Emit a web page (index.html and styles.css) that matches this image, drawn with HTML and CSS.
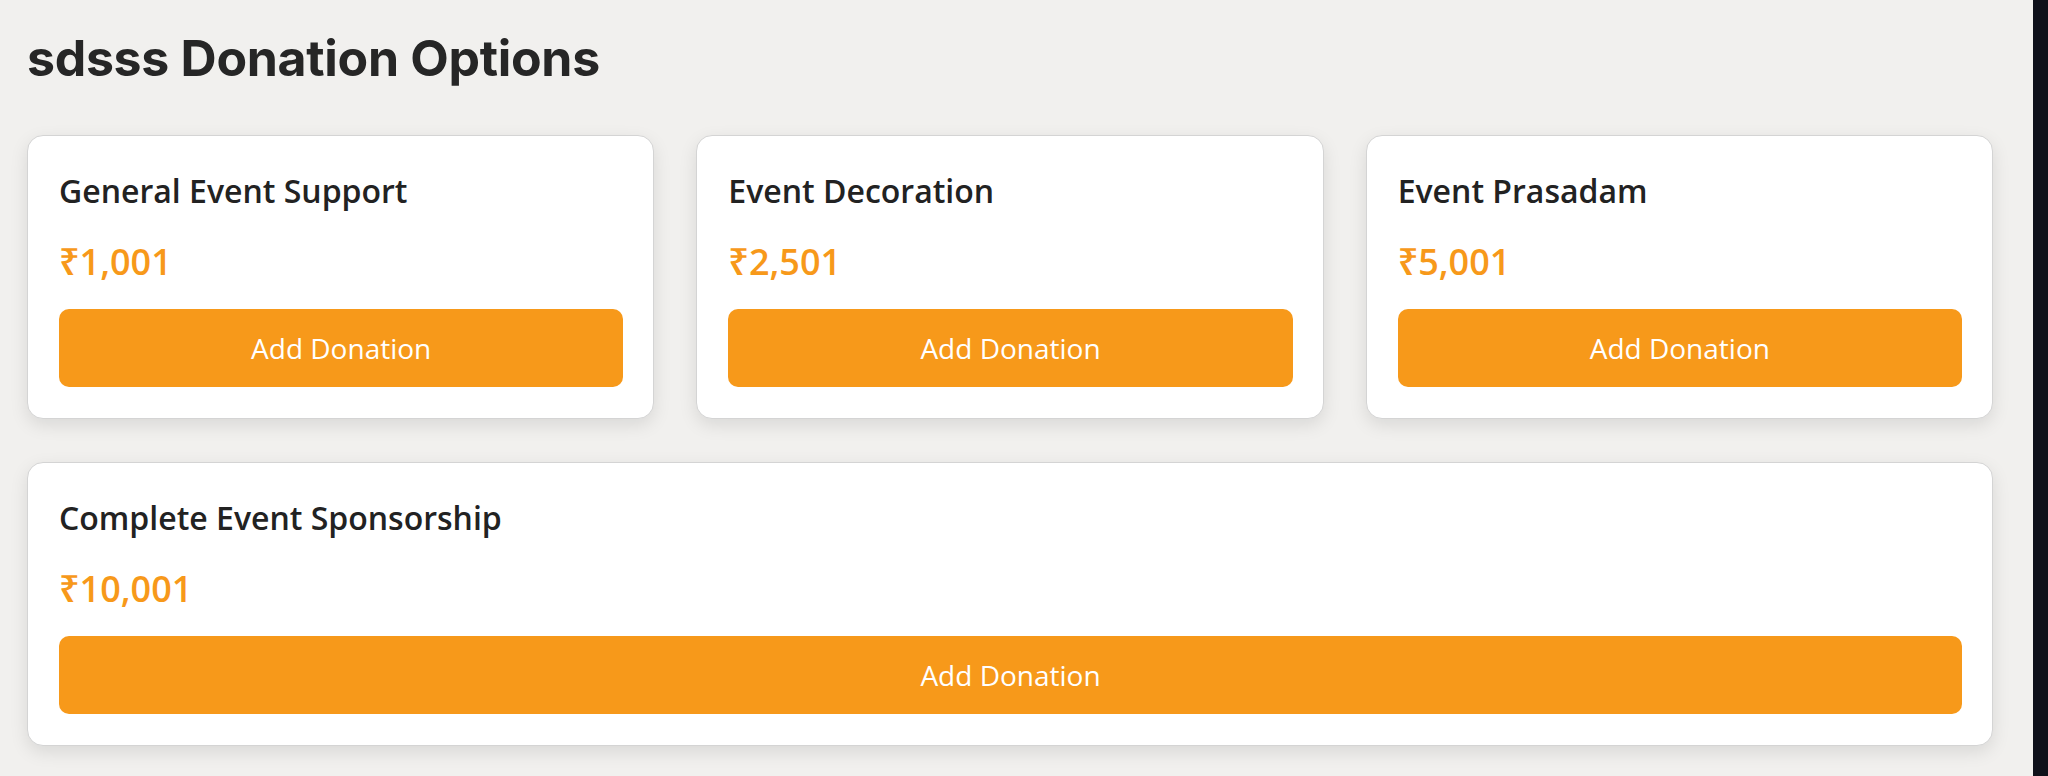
FILE: index.html
```html
<!DOCTYPE html>
<html lang="en">
<head>
<meta charset="utf-8">
<title>sdsss Donation Options</title>
<link rel="stylesheet" href="styles.css">
</head>
<body>
<div class="page">
  <main class="main">
    <h1 class="heading">sdsss Donation Options</h1>
    <div class="grid">
      <div class="card">
        <h3 class="card-title">General Event Support</h3>
        <div class="price">₹1,001</div>
        <button class="btn">Add Donation</button>
      </div>
      <div class="card">
        <h3 class="card-title">Event Decoration</h3>
        <div class="price">₹2,501</div>
        <button class="btn">Add Donation</button>
      </div>
      <div class="card">
        <h3 class="card-title">Event Prasadam</h3>
        <div class="price">₹5,001</div>
        <button class="btn">Add Donation</button>
      </div>
      <div class="card card-wide">
        <h3 class="card-title">Complete Event Sponsorship</h3>
        <div class="price">₹10,001</div>
        <button class="btn">Add Donation</button>
      </div>
    </div>
  </main>
  <div class="scroll-strip"></div>
</div>
</body>
</html>
```
FILE: styles.css
```css
html, body {
  margin: 0;
  padding: 0;
  height: 100%;
}
body {
  background: #f1f0ee;
  font-family: "Open Sans", "Noto Sans", sans-serif;
  color: #222222;
}
.page {
  display: flex;
  min-height: 776px;
}
.main {
  flex: 1;
  padding: 22px 40px 0 27px;
}
.scroll-strip {
  width: 15px;
  background: #0f111a;
  flex-shrink: 0;
}
.heading {
  margin: 0 0 41px 0;
  font-family: "Inter", "Noto Sans", sans-serif;
  font-weight: 700;
  font-size: 50px;
  line-height: 72px;
  color: #262626;
  letter-spacing: -0.3px;
}
.grid {
  display: grid;
  grid-template-columns: repeat(3, 1fr);
  column-gap: 42px;
  row-gap: 43px;
}
.card-wide {
  grid-column: 1 / -1;
}
.card {
  background: #ffffff;
  border: 1px solid #d4d4d4;
  border-radius: 16px;
  box-shadow: 0 6px 18px rgba(0, 0, 0, 0.1);
  padding: 33px 30px 31px 31px;
  display: flex;
  flex-direction: column;
}
.card-title {
  margin: 0;
  font-size: 32px;
  font-weight: 600;
  line-height: 44px;
  color: #222222;
}
.price {
  margin-top: 26px;
  font-size: 36px;
  font-weight: 600;
  line-height: 46px;
  color: #f7991a;
}
.btn {
  margin-top: 24px;
  height: 78px;
  border: none;
  border-radius: 10px;
  background: #f7991a;
  color: #ffffff;
  font-family: "Open Sans", "Noto Sans", sans-serif;
  font-size: 28px;
  font-weight: 500;
  cursor: pointer;
}
```
